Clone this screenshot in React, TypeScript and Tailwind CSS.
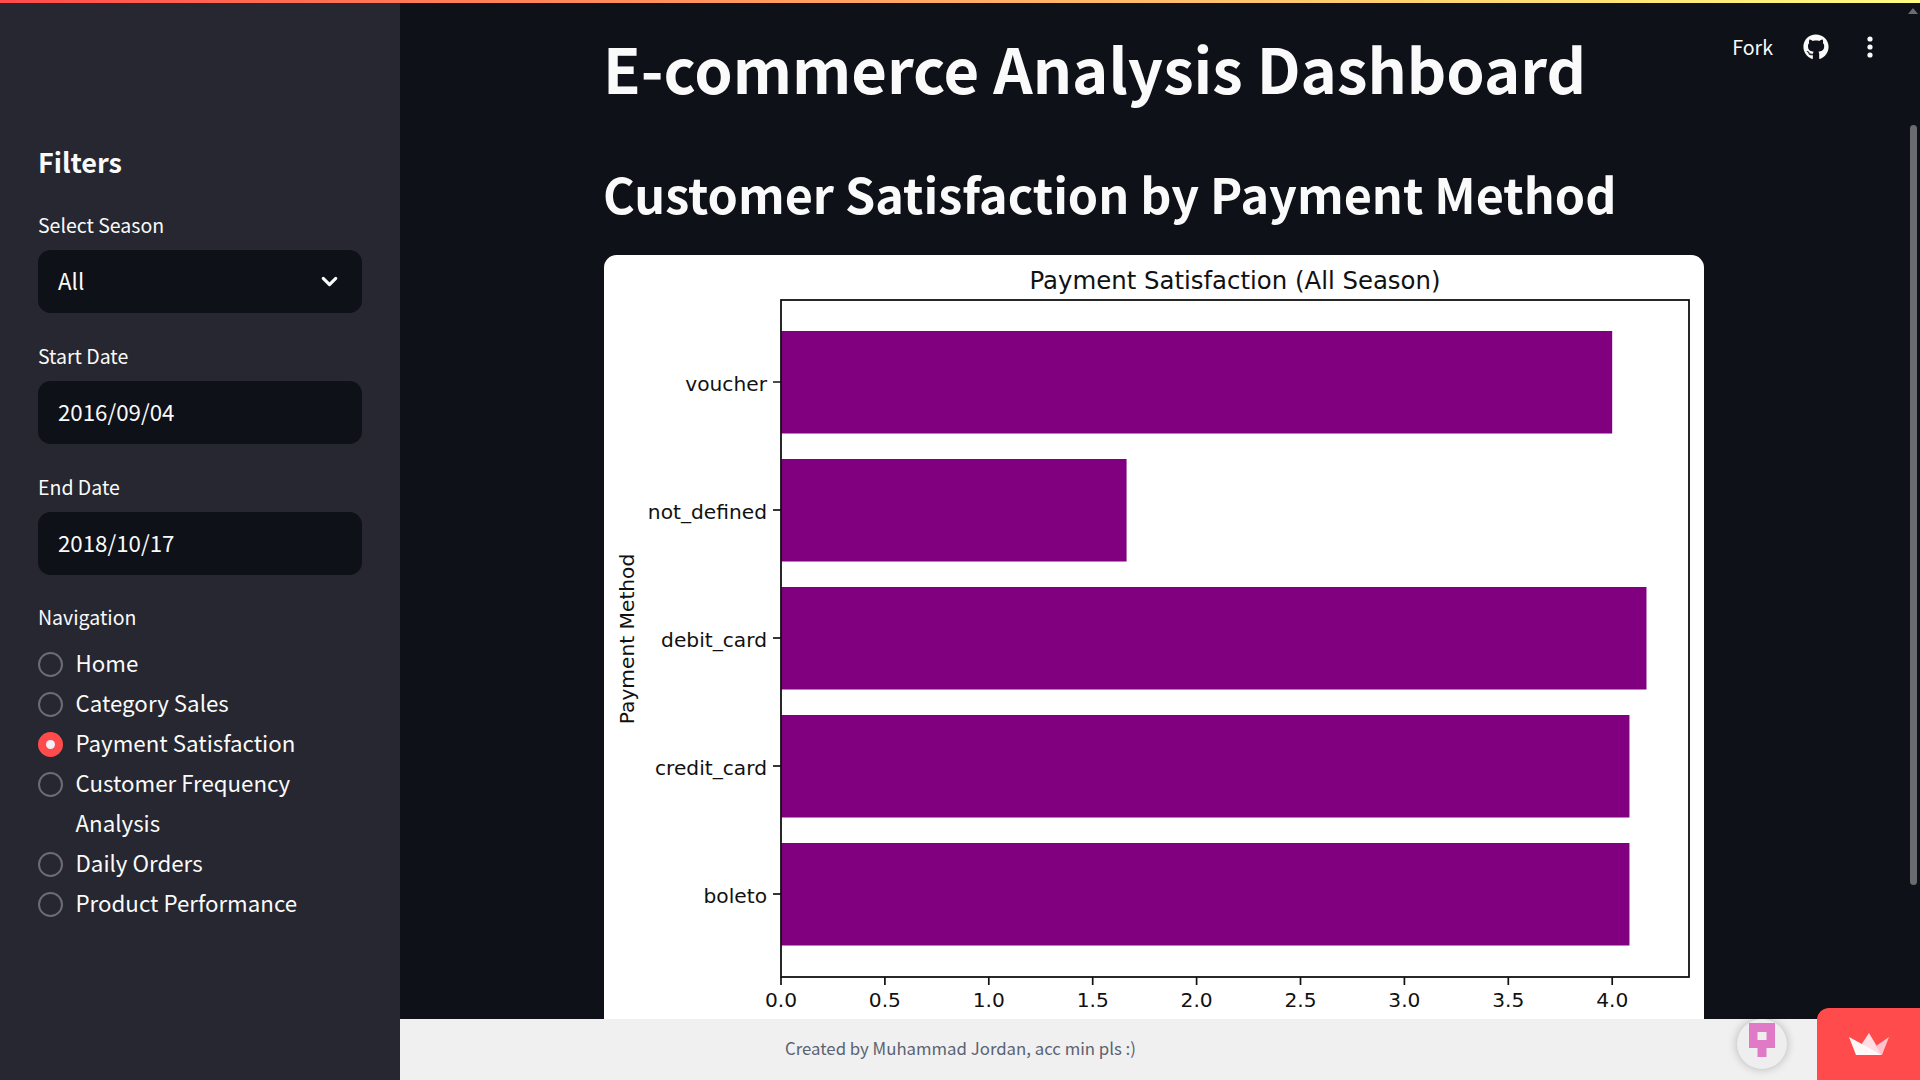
import React from 'react';
import { ChevronDown } from 'lucide-react';
import { FaGithub } from 'react-icons/fa';

const navItems = [
  { label: 'Home' },
  { label: 'Category Sales' },
  { label: 'Payment Satisfaction', active: true },
  { label: 'Customer Frequency Analysis' },
  { label: 'Daily Orders' },
  { label: 'Product Performance' },
];

const bars = [
  { name: 'voucher', value: 4.0, y: 331 },
  { name: 'not_defined', value: 1.663, y: 459 },
  { name: 'debit_card', value: 4.165, y: 587 },
  { name: 'credit_card', value: 4.083, y: 715 },
  { name: 'boleto', value: 4.083, y: 843 },
];

const xTicks = [0, 0.5, 1, 1.5, 2, 2.5, 3, 3.5, 4];

function Field({ label, value, chevron }: { label: string; value: string; chevron?: boolean }) {
  return (
    <div className="mb-[25.5px]">
      <div className="mb-[8px] text-[19.5px] leading-[35px] text-[#fafafa]">{label}</div>
      <div className="flex h-[62.5px] items-center justify-between rounded-[12.5px] bg-[#0e1117] pb-[1px] pl-[20px] pr-[20px] text-[22.3px] text-[#fafafa]">
        <span>{value}</span>
        {chevron && <ChevronDown className="mt-[1px] h-[25px] w-[25px]" strokeWidth={3} />}
      </div>
    </div>
  );
}

// matplotlib figure, coordinates are offset so the card starts at 604,255
function PaymentChart() {
  const x0 = 781;
  const unit = 207.8;
  return (
    <svg viewBox="604 255 1100 800" className="block h-[800px] w-[1100px]" style={{ fontFamily: '"DejaVu Sans", sans-serif' }}>
      <text x="1235" y="289" textAnchor="middle" fontSize="24.4" fill="#111">Payment Satisfaction (All Season)</text>
      {bars.map((b) => (
        <g key={b.name}>
          <rect x={x0} y={b.y} width={b.value * unit} height={102.5} fill="#800080" />
          <line x1="773" x2={x0} y1={b.y + 51} y2={b.y + 51} stroke="#111" strokeWidth="1.7" />
          <text x="767" y={b.y + 60} textAnchor="end" fontSize="20.2" fill="#111">{b.name}</text>
        </g>
      ))}
      <rect x={x0} y="300" width="908" height="677" fill="none" stroke="#111" strokeWidth="1.8" />
      {xTicks.map((t) => (
        <g key={t}>
          <line x1={x0 + t * unit} x2={x0 + t * unit} y1="977" y2="985" stroke="#111" strokeWidth="1.7" />
          <text x={x0 + t * unit} y="1007" textAnchor="middle" fontSize="20.2" fill="#111">{t.toFixed(1)}</text>
        </g>
      ))}
      <text transform="translate(634 639) rotate(-90)" textAnchor="middle" fontSize="20.2" fill="#111">Payment Method</text>
    </svg>
  );
}

export default function App() {
  return (
    <div
      className="relative flex h-screen w-full overflow-hidden bg-[#0e1117]"
      style={{ fontFamily: '"Noto Sans CJK SC", "Noto Sans", sans-serif' }}
    >
      <div className="absolute left-0 right-0 top-0 z-20 h-[3px] bg-gradient-to-r from-[#ff4b4b] to-[#fffd80]" />

      <aside className="w-[400px] shrink-0 bg-[#262730] px-[38px] pt-[139px]">
        <h2 className="mb-[22px] text-[27px] font-semibold leading-[46px] text-[#fafafa]">Filters</h2>
        <Field label="Select Season" value="All" chevron />
        <Field label="Start Date" value="2016/09/04" />
        <Field label="End Date" value="2018/10/17" />
        <div className="-mt-[1px] mb-[8px] text-[19.5px] leading-[35px] text-[#fafafa]">Navigation</div>
        <div className="flex flex-col">
          {navItems.map((item) => (
            <div key={item.label} className="flex items-start gap-[12.5px] text-[22.3px] leading-[40px] text-[#fafafa]">
              {item.active ? (
                <span className="mt-[10px] flex h-[25px] w-[25px] shrink-0 items-center justify-center rounded-full bg-[#ff4b4b]">
                  <span className="h-[9px] w-[9px] rounded-full bg-[#f0f2f6]" />
                </span>
              ) : (
                <span className="mt-[10px] h-[25px] w-[25px] shrink-0 rounded-full border-2 border-[#6c6d74]" />
              )}
              <span>{item.label}</span>
            </div>
          ))}
        </div>
      </aside>

      <div className="flex min-w-0 flex-1 flex-col">
        <main className="min-h-0 flex-1 overflow-hidden pl-[203px] pt-[25px]">
          <h1 className="text-[61.5px] font-bold leading-[86px] text-[#fafafa]">E-commerce Analysis Dashboard</h1>
          <h2 className="mt-[47px] text-[48.5px] font-semibold leading-[70px] text-[#fafafa]">Customer Satisfaction by Payment Method</h2>
          <div className="ml-[1px] mt-[27px] w-[1100px] overflow-hidden rounded-[12.5px] bg-white">
            <PaymentChart />
          </div>
        </main>
        <footer className="flex h-[61px] shrink-0 items-center bg-[#f0f0f0] pb-[2px] pl-[385px] text-[16.8px] text-[#5b6270]">
          Created by Muhammad Jordan, acc min pls :)
        </footer>
      </div>

      {/* toolbar */}
      <div className="absolute right-[46px] top-[31px] flex items-center text-[#fafafa]">
        <span className="text-[19.6px] leading-[32px]">Fork</span>
        <FaGithub className="ml-[30px] h-[26px] w-[26px]" />
        <svg viewBox="0 0 8 24" className="ml-[37px] h-[24px] w-[8px]" fill="currentColor">
          <circle cx="4" cy="4" r="2.6" />
          <circle cx="4" cy="12" r="2.6" />
          <circle cx="4" cy="20" r="2.6" />
        </svg>
      </div>

      {/* scrollbar */}
      <svg viewBox="0 0 10 6" className="absolute right-[2px] top-[8px] h-[6px] w-[10px]" fill="#6b6c70">
        <polygon points="5,0 10,6 0,6" />
      </svg>
      <div className="absolute right-[3px] top-[125px] h-[760px] w-[7px] rounded-full bg-[#6b6c70]" />

      {/* hosted badges */}
      <div className="absolute bottom-[11px] left-[1737px] flex h-[50px] w-[50px] items-center justify-center rounded-full bg-[#eeeeee] shadow-[0_0_10px_rgba(0,0,0,0.25)]">
        <svg viewBox="0 0 26 34" className="mb-[8px] h-[34px] w-[26px]" fill="#e07ac6">
          <path fillRule="evenodd" d="M0 0h26v25h-8.5v9h-9v-9H0zM8.5 9v8h9V9z" />
        </svg>
      </div>
      <div className="absolute bottom-0 right-0 flex h-[72px] w-[103px] items-center justify-center rounded-tl-[12px] bg-[#ff4b4b]">
        <svg viewBox="0 0 40 22" className="h-[22px] w-[40px]">
          <polygon points="0,4 20,0 40,4 33,22 7,22" fill="#ff4b4b" />
          <polygon points="20,0 33,22 12,12" fill="#ffdde3" />
          <polygon points="40,4 33,22 27,13" fill="#ffc2cc" />
          <polygon points="0,4 33,22 7,22" fill="#fff8f8" />
        </svg>
      </div>
    </div>
  );
}
